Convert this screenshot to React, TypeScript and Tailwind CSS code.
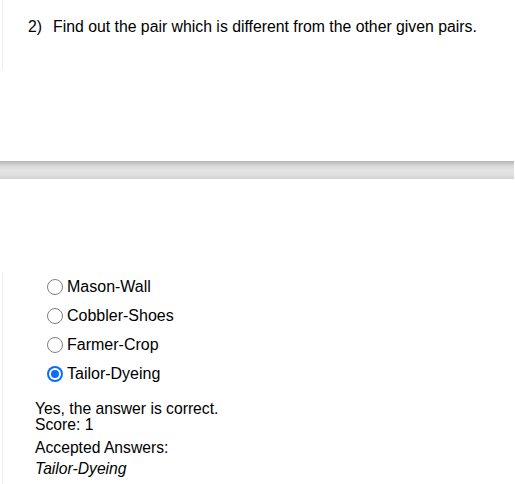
import React from "react";

const options = ["Mason-Wall", "Cobbler-Shoes", "Farmer-Crop", "Tailor-Dyeing"];

function Radio({ checked }: { checked: boolean }) {
  if (checked) {
    return (
      <span className="w-[16px] h-[16px] rounded-full bg-[#0a6cff] flex items-center justify-center shrink-0">
        <span className="w-[12px] h-[12px] rounded-full bg-white flex items-center justify-center">
          <span className="w-[8px] h-[8px] rounded-full bg-[#0a6cff]" />
        </span>
      </span>
    );
  }
  return <span className="w-[16px] h-[16px] rounded-full border border-[#808080] bg-white shrink-0" />;
}

export default function App() {
  return (
    <div className="w-[515px] h-[484px] bg-white overflow-hidden text-black" style={{ fontFamily: '"Liberation Sans", Arial, sans-serif' }}>
      <div className="ml-[2px] h-[69px] border-l border-[#eeeeee] pt-[17px] pl-[25px] text-[15.8px] leading-[20px]">
        <span>2)</span>
        <span className="ml-[11px]">Find out the pair which is different from the other given pairs.</span>
      </div>
      <div className="h-[92px]" />
      <div className="h-[18px] w-[514px] bg-[linear-gradient(to_bottom,#b4b4b4_0%,#d6d6d6_25%,#e4e4e4_50%,#e0e0e0_75%,#d2d2d2_100%)]" />
      <div className="h-[93px]" />
      <div className="ml-[2px] h-[212px] border-l border-[#eeeeee] pl-[44px]">
        <div className="flex flex-col">
          {options.map((o, i) => (
            <div key={o} className="flex items-center h-[29px] text-[16px]">
              <Radio checked={i === 3} />
              <span className="ml-[4px]">{o}</span>
            </div>
          ))}
        </div>
        <div className="-ml-[12px] mt-[13px] text-[15.7px] leading-[16px]">
          <div>Yes, the answer is correct.</div>
          <div>Score: 1</div>
          <div className="mt-[5px] leading-[20px]">Accepted Answers:</div>
          <div className="italic leading-[21px]">Tailor-Dyeing</div>
        </div>
      </div>
    </div>
  );
}
